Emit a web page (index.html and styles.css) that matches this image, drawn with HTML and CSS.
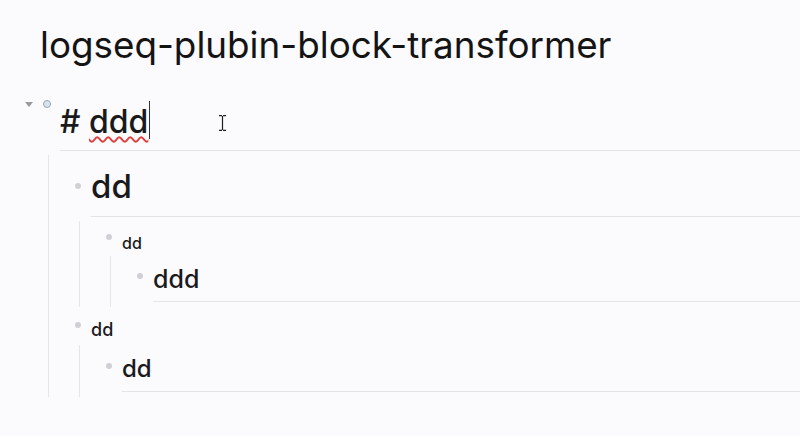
FILE: index.html
```html
<!DOCTYPE html>
<html>
<head>
<meta charset="utf-8">
<link rel="stylesheet" href="styles.css">
</head>
<body>
<div class="page">
  <h1 class="title">logseq-plubin-block-transformer</h1>
  <div class="blocks">
    <div class="block">
      <div class="row row-a">
        <span class="toggle"></span>
        <span class="bw"><span class="dot dot-open"></span></span>
        <div class="content heading h-a"># <span class="spell">ddd</span><span class="caret"></span></div>
        <svg class="ibeam" width="9" height="16" viewBox="0 0 9 16"><path d="M1 0.6h3M5 0.6h3M4.5 1v14M1 15.4h3M5 15.4h3" stroke="#1e1e1e" stroke-width="1.2" fill="none"/></svg>
      </div>
      <div class="children ch-a">
        <div class="block">
          <div class="row row-b">
            <span class="bw"><span class="dot"></span></span>
            <div class="content heading h-b">dd</div>
          </div>
          <div class="children ch-b">
            <div class="block">
              <div class="row row-c">
                <span class="bw"><span class="dot"></span></span>
                <div class="content t-c">dd</div>
              </div>
              <div class="children ch-c">
                <div class="block">
                  <div class="row row-d">
                    <span class="bw"><span class="dot"></span></span>
                    <div class="content heading h-d">ddd</div>
                  </div>
                </div>
              </div>
            </div>
          </div>
        </div>
        <div class="block">
          <div class="row row-e">
            <span class="bw"><span class="dot"></span></span>
            <div class="content t-e">dd</div>
          </div>
          <div class="children ch-e">
            <div class="block">
              <div class="row row-f">
                <span class="bw"><span class="dot"></span></span>
                <div class="content heading h-f">dd</div>
              </div>
            </div>
          </div>
        </div>
      </div>
    </div>
  </div>
</div>
</body>
</html>
```
FILE: styles.css
```css
html, body {
  margin: 0;
  padding: 0;
  background: #fbfafc;
}
body {
  font-family: Inter, "Noto Sans", sans-serif;
  color: #1a1a1c;
  width: 800px;
  height: 436px;
  overflow: hidden;
}
.page {
  padding-top: 23px;
}
.title {
  margin: 0 0 0 40px;
  font-size: 36.8px;
  line-height: 44px;
  font-weight: 400;
  color: #141414;
}
.blocks {
  margin-top: 29px;
  padding-left: 34px;
}
.row {
  display: flex;
  align-items: flex-start;
  position: relative;
}
.bw {
  width: 26px;
  flex: none;
  display: flex;
  justify-content: center;
}
.content {
  flex: 1;
  min-width: 0;
}
.heading {
  border-bottom: 1px solid #e4e3e8;
  font-weight: 500;
}
.dot {
  display: block;
  width: 6px;
  height: 6px;
  border-radius: 50%;
  background: #d0d0d5;
}
.dot-open {
  width: 6px;
  height: 6px;
  background: #d9e4ec;
  border: 1.5px solid #94a7b6;
}
.toggle {
  position: absolute;
  left: -9px;
  top: 6px;
  width: 0;
  height: 0;
  border-left: 4.5px solid transparent;
  border-right: 4.5px solid transparent;
  border-top: 5px solid #9a9a9e;
}
.ibeam {
  position: absolute;
  left: 184px;
  top: 19px;
}
.children {
  margin-left: 14px;
  border-left: 1px solid #e6e5ea;
  padding-left: 16px;
}

/* row A */
.row-a { padding-top: 4px; }
.h-a {
  font-size: 32px;
  line-height: 44px;
  padding-bottom: 6px;
}
.spell {
  text-decoration: underline wavy #e03c3c;
  text-decoration-thickness: 1.5px;
  text-underline-offset: 3px;
}
.caret {
  display: inline-block;
  width: 1px;
  height: 38px;
  background: #333;
  vertical-align: -6px;
  margin-left: 1px;
}
.ch-a { margin-top: 4px; }

.row-b { padding-top: 9px; }
.row-b .bw { padding-top: 19px; }
.h-b {
  font-size: 33px;
  line-height: 44px;
  padding-bottom: 8px;
}
.ch-b { margin-top: 4px; }

.row-c { padding-top: 12px; }
.row-c .bw { padding-top: 1px; }
.t-c {
  font-size: 16px;
  line-height: 20px;
  font-weight: 500;
}
.ch-c { margin-top: 3px; }

.row-d { padding-top: 6px; padding-bottom: 5px; }
.row-d .bw { padding-top: 11px; }
.h-d {
  font-size: 25px;
  line-height: 34px;
  padding-bottom: 5px;
}

.row-e { padding-top: 12px; }
.row-e .bw { padding-top: 3px; }
.t-e {
  font-size: 18px;
  line-height: 22px;
  font-weight: 500;
}
.ch-e { margin-top: 4px; }

.row-f { padding-top: 8px; padding-bottom: 5px; }
.row-f .bw { padding-top: 10px; }
.h-f {
  font-size: 24px;
  line-height: 32px;
  padding-bottom: 6px;
}
```
